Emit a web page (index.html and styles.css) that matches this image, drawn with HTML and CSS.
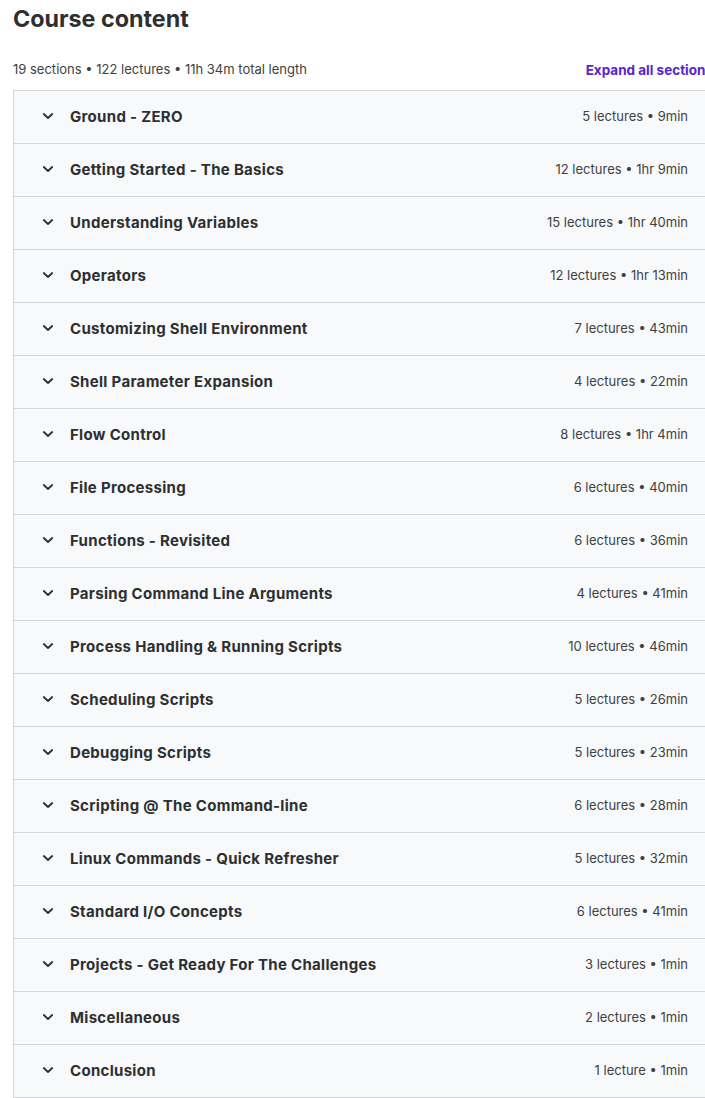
FILE: index.html
```html
<!DOCTYPE html>
<html lang="en">
<head>
    <meta charset="UTF-8">
    <meta name="viewport" content="width=device-width, initial-scale=1.0">
    <title>Course content</title>
    <link rel="stylesheet" href="styles.css">
</head>
<body>
    <div class="curriculum">
        <h2 class="heading">Course content</h2>

        <div class="summary">
            <span>19 sections • 122 lectures • 11h 34m total length</span>
            <button class="expand-btn">Expand all sections</button>
        </div>

        <div class="sections" id="sections"></div>
    </div>

    <script>
        const sections = [
            ['Ground - ZERO', '5 lectures • 9min'],
            ['Getting Started - The Basics', '12 lectures • 1hr 9min'],
            ['Understanding Variables', '15 lectures • 1hr 40min'],
            ['Operators', '12 lectures • 1hr 13min'],
            ['Customizing Shell Environment', '7 lectures • 43min'],
            ['Shell Parameter Expansion', '4 lectures • 22min'],
            ['Flow Control', '8 lectures • 1hr 4min'],
            ['File Processing', '6 lectures • 40min'],
            ['Functions - Revisited', '6 lectures • 36min'],
            ['Parsing Command Line Arguments', '4 lectures • 41min'],
            ['Process Handling & Running Scripts', '10 lectures • 46min'],
            ['Scheduling Scripts', '5 lectures • 26min'],
            ['Debugging Scripts', '5 lectures • 23min'],
            ['Scripting @ The Command-line', '6 lectures • 28min'],
            ['Linux Commands - Quick Refresher', '5 lectures • 32min'],
            ['Standard I/O Concepts', '6 lectures • 41min'],
            ['Projects - Get Ready For The Challenges', '3 lectures • 1min'],
            ['Miscellaneous', '2 lectures • 1min'],
            ['Conclusion', '1 lecture • 1min']
        ];

        const chevron = '<svg class="chevron" viewBox="0 0 16 16" width="16" height="16">' +
            '<path d="M3.8 6 L8 10 L12.2 6" fill="none" stroke="currentColor" stroke-width="1.8" stroke-linecap="round" stroke-linejoin="round"/></svg>';

        const list = document.getElementById('sections');
        sections.forEach(([title, meta]) => {
            const row = document.createElement('div');
            row.className = 'section-row';
            row.innerHTML = chevron +
                '<span class="section-title"></span>' +
                '<span class="section-meta"></span>';
            row.querySelector('.section-title').textContent = title;
            row.querySelector('.section-meta').textContent = meta;
            list.appendChild(row);
        });
    </script>
</body>
</html>
```

FILE: styles.css
```css
* {
    margin: 0;
    padding: 0;
    box-sizing: border-box;
}

body {
    font-family: Inter, "Open Sans", sans-serif;
    color: #2d2f31;
    background: #fff;
    overflow: hidden;
}

.curriculum {
    width: 700px;
    margin-left: 13px;
}

.heading {
    font-size: 23.3px;
    font-weight: 700;
    line-height: 36px;
    padding-top: 1px;
}

.summary {
    display: flex;
    justify-content: space-between;
    align-items: center;
    margin-top: 21px;
    height: 22px;
    font-size: 13px;
    color: #3e4143;
}

.expand-btn {
    background: none;
    border: none;
    font-family: inherit;
    font-size: 13.5px;
    font-weight: 700;
    color: #5624d0;
    cursor: pointer;
    margin-top: 2px;
}

.sections {
    margin-top: 10px;
    border: 1px solid #d1d7dc;
    border-bottom: none;
}

.section-row {
    display: flex;
    align-items: center;
    height: 53px;
    padding: 0 24px 2px 26px;
    background: #f7f9fa;
    border-bottom: 1px solid #d1d7dc;
}

.chevron {
    flex: none;
    color: #2d2f31;
    margin-right: 14px;
}

.section-title {
    flex: 1;
    font-size: 15px;
    font-weight: 700;
    letter-spacing: 0.3px;
}

.section-meta {
    font-size: 13px;
    color: #3e4143;
}
```
